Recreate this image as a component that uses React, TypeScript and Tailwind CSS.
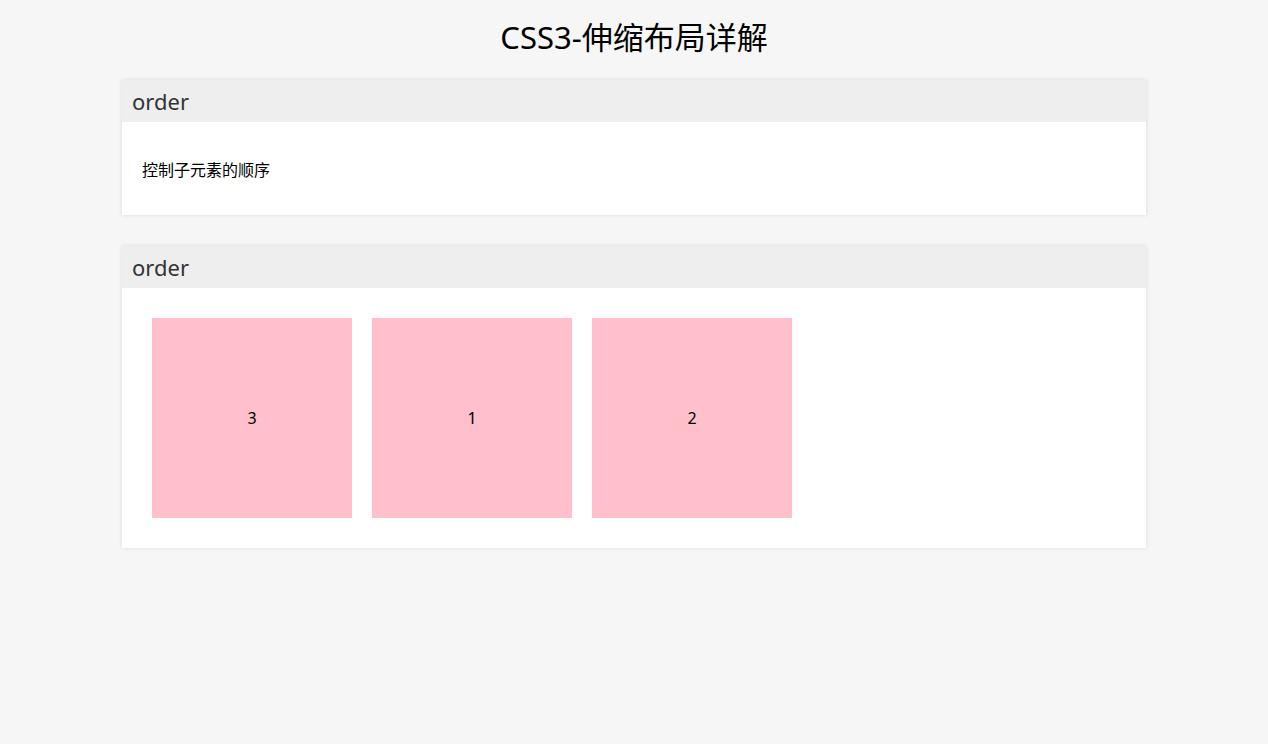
import * as React from 'react';

const font = { fontFamily: '"Noto Sans", "Noto Sans CJK SC", sans-serif' };

function Panel({ title, children }: { title: string; children: React.ReactNode }) {
    return (
        <section className="bg-white shadow-[0_0_4px_rgba(0,0,0,0.12)]">
            <h2 className="flex h-[42px] items-center bg-[#eeeeee] px-[10px] text-[22px] font-normal text-[#333333]">{title}</h2>
            {children}
        </section>
    );
}

export default function App() {
    const boxes = [
        { label: '1', order: 'order-2' },
        { label: '2', order: 'order-3' },
        { label: '3', order: 'order-1' },
    ];

    return (
        <div className="min-h-[744px] bg-[#f6f6f6] text-black" style={font}>
            <h1 className="flex h-[80px] items-center justify-center pb-[6px] text-[31px] font-normal">CSS3-伸缩布局详解</h1>
            <div className="mx-auto flex w-[1024px] flex-col gap-[31px]">
                <Panel title="order">
                    <div className="flex h-[93px] items-center px-[20px] pt-[2px] text-[16px]">控制子元素的顺序</div>
                </Panel>
                <Panel title="order">
                    <div className="flex p-[20px]">
                        {boxes.map((box) => (
                            <div
                                key={box.label}
                                className={`m-[10px] flex h-[200px] w-[200px] items-center justify-center bg-[#ffc0cb] text-[16px] ${box.order}`}
                            >
                                {box.label}
                            </div>
                        ))}
                    </div>
                </Panel>
            </div>
        </div>
    );
}
